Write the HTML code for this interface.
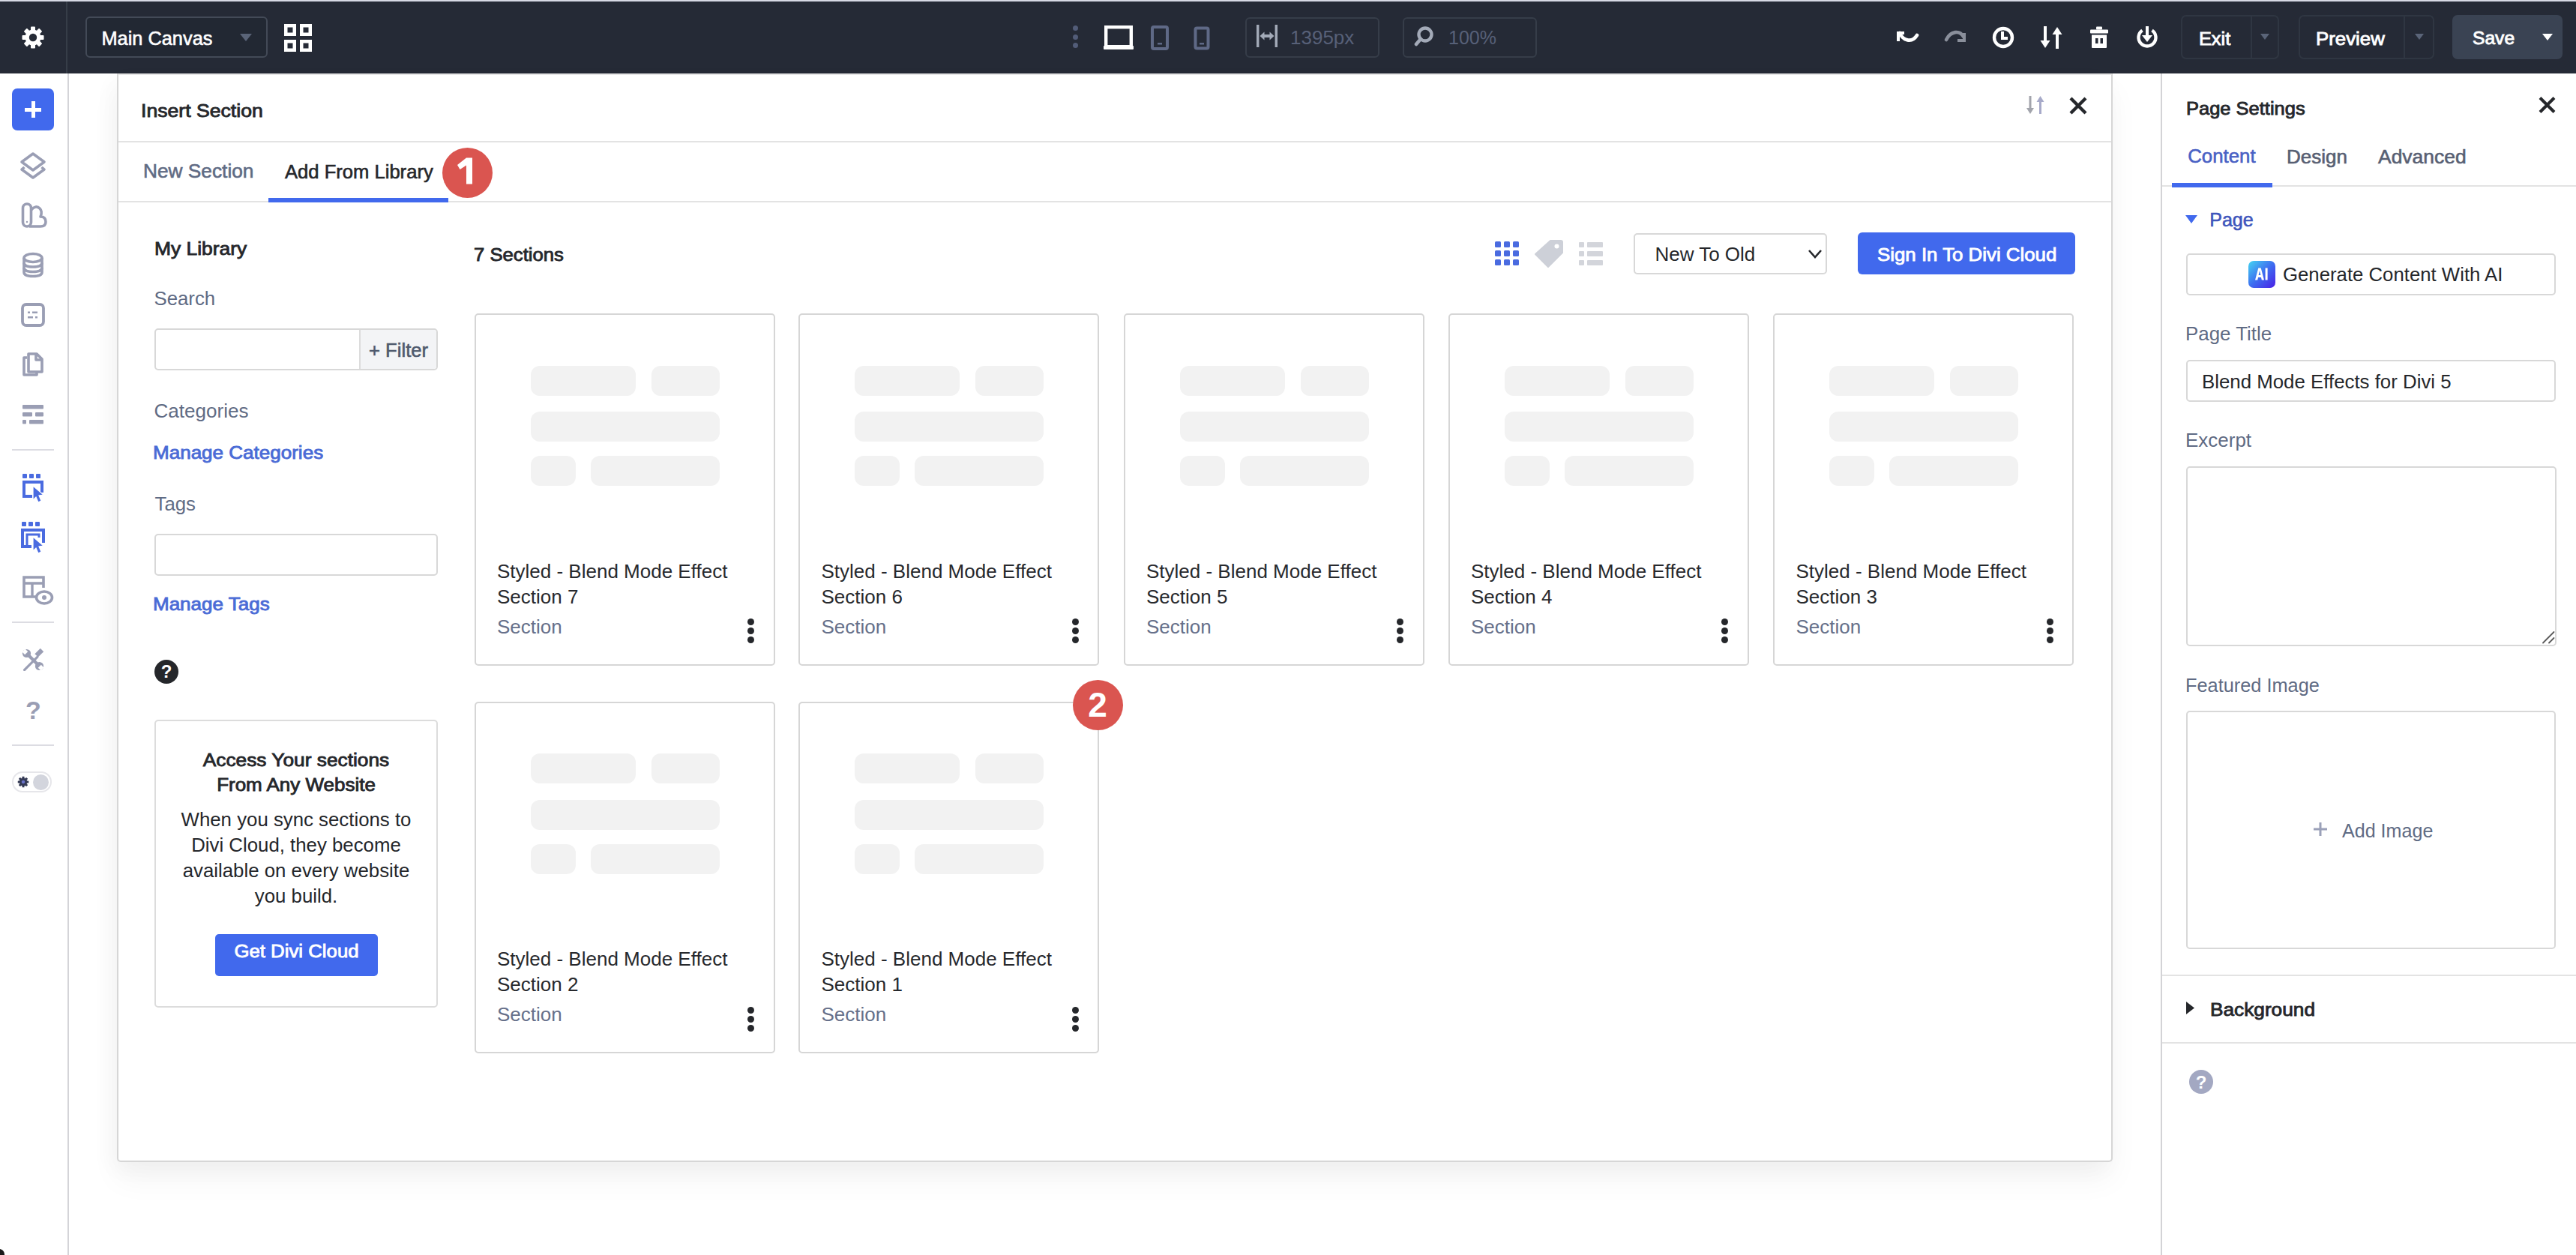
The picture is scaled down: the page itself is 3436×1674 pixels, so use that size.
<!DOCTYPE html>
<html><head><meta charset="utf-8">
<style>
*{box-sizing:border-box}
html,body{margin:0;padding:0}
body{width:3436px;height:1674px;position:relative;overflow:hidden;background:#fff;font-family:"Liberation Sans",sans-serif;color:#25272b}
.a{position:absolute}
.t{position:absolute;white-space:nowrap;line-height:1}
.m{-webkit-text-stroke:0.6px}
.m2{-webkit-text-stroke:0.85px}
#topstrip{left:0;top:0;width:3436px;height:2px;background:#d6d9e4}
#bar{left:0;top:2px;width:3436px;height:96px;background:#252a36}
#sidebar-sep{left:90px;top:98px;width:2px;height:1576px;background:#d4d4d8}
#modal{left:156px;top:98px;width:2662px;height:1452px;border:2px solid #d6d6d6;border-top-color:#e6e6e6;border-radius:0 0 5px 5px;background:#fff;box-shadow:0 24px 40px rgba(0,0,0,0.045), -6px 10px 30px rgba(0,0,0,0.03)}
#panel{left:2882px;top:98px;width:554px;height:1576px;background:#fff;border-left:2px solid #d3d3d6}
.hline{position:absolute;height:2px;background:#e3e3e3}
.card{position:absolute;width:401px;height:469.5px;border:2px solid #d6d6d6;border-radius:5px;background:#fff}
.sk{position:absolute;background:#f2f2f2;border-radius:12px;height:40px}
.ctitle{position:absolute;left:28.5px;white-space:nowrap;font-size:26px;line-height:34px;color:#27292d}
.csub{position:absolute;left:28.5px;font-size:26px;line-height:1;color:#66708a}
.dots{position:absolute;right:25.5px;width:9px}
.dots i{display:block;width:9px;height:9px;border-radius:50%;background:#25272b;margin-bottom:3px}
.input{position:absolute;border:2px solid #d8d8d8;border-radius:5px;background:#fff}
.slate{color:#5f6b84}
.blue{color:#4a6bd6}
.badge{position:absolute;width:67px;height:67px;border-radius:50%;background:#da5550;color:#fff;font-weight:bold;font-size:46px;text-align:center;line-height:67px}
</style></head>
<body>
<div id="topstrip" class="a"></div>
<div id="bar" class="a"></div>

<!-- TOP BAR -->
<div class="a" style="left:88px;top:2px;width:2px;height:96px;background:#363d48"></div>
<svg class="a" style="left:28px;top:34px" width="32" height="32" viewBox="0 0 32 32">
 <g fill="#fff" transform="translate(16,16)">
  <circle r="10.5"/>
  <g id="tooth"><rect x="-3" y="-14.5" width="6" height="6" rx="1"/></g>
  <use href="#tooth" transform="rotate(45)"/><use href="#tooth" transform="rotate(90)"/><use href="#tooth" transform="rotate(135)"/>
  <use href="#tooth" transform="rotate(180)"/><use href="#tooth" transform="rotate(225)"/><use href="#tooth" transform="rotate(270)"/><use href="#tooth" transform="rotate(315)"/>
  <circle r="5.2" fill="#252a36"/>
 </g>
</svg>
<div class="a" style="left:114px;top:22px;width:243px;height:55px;border:2px solid #434a57;border-radius:6px;background:#222833"></div>
<div class="t m" style="left:135.5px;top:38.9px;font-size:25.35px;color:#fff">Main Canvas</div>
<svg class="a" style="left:319px;top:44px" width="18" height="12" viewBox="0 0 18 12"><path d="M1 1 L17 1 L9 11 Z" fill="#5a6478"/></svg>
<svg class="a" style="left:379px;top:32px" width="37" height="37" viewBox="0 0 37 37" fill="none" stroke="#fff" stroke-width="4.5">
 <rect x="2.25" y="2.25" width="11.5" height="11.5"/><rect x="23.25" y="2.25" width="11.5" height="11.5"/>
 <rect x="2.25" y="23.25" width="11.5" height="11.5"/><rect x="23.25" y="23.25" width="11.5" height="11.5"/>
</svg>
<!-- dots -->
<div class="a" style="left:1431px;top:34px;width:7px;height:7px;border-radius:50%;background:#525c78"></div>
<div class="a" style="left:1431px;top:45.5px;width:7px;height:7px;border-radius:50%;background:#525c78"></div>
<div class="a" style="left:1431px;top:57px;width:7px;height:7px;border-radius:50%;background:#525c78"></div>
<!-- laptop -->
<svg class="a" style="left:1470px;top:32px" width="44" height="36" viewBox="0 0 44 36">
 <rect x="5.2" y="4.2" width="33.6" height="26" fill="none" stroke="#fff" stroke-width="4.4"/>
 <rect x="2" y="29" width="40" height="5" rx="1" fill="#fff"/>
</svg>
<!-- tablet -->
<svg class="a" style="left:1533px;top:32px" width="28" height="36" viewBox="0 0 28 36">
 <rect x="4" y="4" width="20" height="29" rx="2" fill="none" stroke="#5f6986" stroke-width="4"/>
 <rect x="11" y="25" width="6" height="2.5" fill="#5f6986"/>
</svg>
<!-- phone -->
<svg class="a" style="left:1591px;top:34px" width="24" height="34" viewBox="0 0 24 34">
 <rect x="3.5" y="3.5" width="17" height="27" rx="2" fill="none" stroke="#5f6986" stroke-width="4"/>
 <rect x="9" y="23" width="6" height="2.5" fill="#5f6986"/>
</svg>
<div class="a" style="left:1661px;top:23px;width:179px;height:54px;border:2px solid #363d49;border-radius:6px"></div>
<svg class="a" style="left:1674px;top:32px" width="32" height="32" viewBox="0 0 32 32">
 <rect x="2" y="1" width="3.4" height="30" fill="#a3aab8"/><rect x="26.6" y="1" width="3.4" height="30" fill="#a3aab8"/>
 <path d="M6.5 16 L12.5 10.5 L12.5 14 L19.5 14 L19.5 10.5 L25.5 16 L19.5 21.5 L19.5 18 L12.5 18 L12.5 21.5 Z" fill="#a3aab8"/>
</svg>
<div class="t" style="left:1721.0px;top:36.9px;font-size:26.01px;color:#576078">1395px</div>
<div class="a" style="left:1871px;top:23px;width:179px;height:54px;border:2px solid #363d49;border-radius:6px"></div>
<svg class="a" style="left:1886px;top:33px" width="28" height="30" viewBox="0 0 28 30">
 <circle cx="15" cy="13" r="8.5" fill="none" stroke="#a3aab8" stroke-width="4.4"/>
 <path d="M9 19 L3 26" stroke="#a3aab8" stroke-width="4.6" stroke-linecap="round"/>
</svg>
<div class="t" style="left:1932.0px;top:38.0px;font-size:25.00px;color:#576078">100%</div>
<!-- right icons -->
<svg class="a" style="left:2526px;top:38px" width="36" height="22" viewBox="0 0 36 22">
 <path d="M8 6 C 12 16, 24 20, 31 9" fill="none" stroke="#fff" stroke-width="4.6" stroke-linecap="round"/>
 <path d="M4 4 L14 4 L14 8 L8 8 L8 17 L4 17 Z" fill="#fff"/>
</svg>
<svg class="a" style="left:2592px;top:36px" width="34" height="24" viewBox="0 0 34 24">
 <path d="M4 17 C 10 5, 22 4, 27 13" fill="none" stroke="#8a8f9b" stroke-width="4.6" stroke-linecap="round"/>
 <path d="M30 8 L30 20 L19 20 L19 16 L26 16 L26 8 Z" fill="#8a8f9b"/>
</svg>
<svg class="a" style="left:2655px;top:34px" width="34" height="32" viewBox="0 0 34 32">
 <circle cx="17" cy="16" r="12" fill="none" stroke="#fff" stroke-width="4.4"/>
 <path d="M16 8 L16 17 L23 17" fill="none" stroke="#fff" stroke-width="4"/>
</svg>
<svg class="a" style="left:2719px;top:34px" width="34" height="32" viewBox="0 0 34 32">
 <rect x="7" y="1" width="4" height="22" fill="#fff"/><path d="M2.5 20 L15.5 20 L9 30 Z" fill="#fff"/>
 <rect x="23" y="9" width="4" height="22" fill="#fff"/><path d="M18.5 12 L31.5 12 L25 2 Z" fill="#fff"/>
</svg>
<svg class="a" style="left:2786px;top:34px" width="28" height="32" viewBox="0 0 28 32">
 <rect x="10" y="1.5" width="8" height="4" rx="1" fill="#fff"/>
 <rect x="2" y="5.5" width="24" height="5" rx="1" fill="#fff"/>
 <path d="M4 12.5 L24 12.5 L24 29 Q24 30 23 30 L5 30 Q4 30 4 29 Z" fill="#fff"/>
 <rect x="9" y="17" width="3.5" height="7" fill="#252a36"/><rect x="15.5" y="17" width="3.5" height="7" fill="#252a36"/>
</svg>
<svg class="a" style="left:2848px;top:34px" width="32" height="32" viewBox="0 0 32 32">
 <path d="M9.5 6.5 A 11.5 11.5 0 1 0 22.5 6.5" fill="none" stroke="#fff" stroke-width="4.4"/>
 <rect x="14" y="1" width="4" height="15" fill="#fff"/><path d="M9 13 L23 13 L16 22 Z" fill="#fff"/>
</svg>
<div class="a" style="left:2909px;top:20px;width:131px;height:59px;border:2px solid #2f3642;border-radius:7px"></div>
<div class="a" style="left:3002px;top:20px;width:2px;height:59px;background:#2f3642"></div>
<div class="t m2" style="left:2933.0px;top:39.9px;font-size:24.20px;font-weight:normal;color:#fff;transform-origin:0 0;transform:scaleX(1.0459);">Exit</div>
<svg class="a" style="left:3014px;top:44px" width="14" height="10" viewBox="0 0 14 10"><path d="M1 1 L13 1 L7 9 Z" fill="#5a6478"/></svg>
<div class="a" style="left:3066px;top:20px;width:181px;height:59px;border:2px solid #2f3642;border-radius:7px"></div>
<div class="a" style="left:3206px;top:20px;width:2px;height:59px;background:#2f3642"></div>
<div class="t m2" style="left:3089.0px;top:39.9px;font-size:24.20px;font-weight:normal;color:#fff;transform-origin:0 0;transform:scaleX(1.0669);">Preview</div>
<svg class="a" style="left:3220px;top:44px" width="14" height="10" viewBox="0 0 14 10"><path d="M1 1 L13 1 L7 9 Z" fill="#5a6478"/></svg>
<div class="a" style="left:3271px;top:20px;width:147px;height:59px;border-radius:7px;background:#3a4353"></div>
<div class="t m2" style="left:3297.6px;top:39.1px;font-size:24.20px;font-weight:normal;color:#fff;transform-origin:0 0;transform:scaleX(1.0174);">Save</div>
<svg class="a" style="left:3390px;top:44px" width="16" height="11" viewBox="0 0 16 11"><path d="M1 1 L15 1 L8 10 Z" fill="#fff"/></svg>
<div id="sidebar-sep" class="a"></div>

<!-- SIDEBAR -->
<div class="a" style="left:16px;top:118px;width:56px;height:56px;border-radius:7px;background:#4169ed"></div>
<div class="a" style="left:33px;top:143.5px;width:22px;height:5px;background:#fff"></div>
<div class="a" style="left:41.5px;top:135px;width:5px;height:22px;background:#fff"></div>
<svg class="a" style="left:26px;top:202px" width="36" height="38" viewBox="0 0 36 38" fill="none" stroke="#9a9eb4" stroke-width="3.6" stroke-linejoin="round">
 <path d="M18 3 L33 14 L18 25 L3 14 Z"/>
 <path d="M6.5 21 L3 24 L18 35 L33 24 L29.5 21"/>
</svg>
<svg class="a" style="left:27px;top:269px" width="38" height="36" viewBox="0 0 38 36" fill="none" stroke="#9a9eb4" stroke-width="3.6" stroke-linejoin="round">
 <rect x="3.5" y="3" width="11" height="30" rx="5.5"/>
 <path d="M14.5 11 Q 21 4 26 9 Q 30 13 27 20 Q 34 20 34 27 Q 34 33 27 33 L 12 33"/>
 <circle cx="9" cy="27" r="1.2" fill="#9a9eb4" stroke="none"/>
</svg>
<svg class="a" style="left:28px;top:336px" width="32" height="35" viewBox="0 0 32 35" fill="none" stroke="#9a9eb4" stroke-width="3.6">
 <ellipse cx="16" cy="8" rx="12" ry="5.5"/>
 <path d="M4 8 L4 27 Q4 32.5 16 32.5 Q28 32.5 28 27 L28 8"/>
 <path d="M4 14.5 Q4 20 16 20 Q28 20 28 14.5"/><path d="M4 21 Q4 26.5 16 26.5 Q28 26.5 28 21"/>
</svg>
<svg class="a" style="left:26px;top:402px" width="36" height="36" viewBox="0 0 36 36">
 <rect x="4" y="4" width="28" height="28" rx="5" fill="none" stroke="#9a9eb4" stroke-width="3.8"/>
 <rect x="11" y="13.5" width="3" height="2.5" fill="#9a9eb4"/><rect x="17" y="13.5" width="7" height="2.5" fill="#9a9eb4"/>
 <rect x="11" y="20" width="7" height="2.5" fill="#9a9eb4"/><rect x="21" y="20" width="3" height="2.5" fill="#9a9eb4"/>
</svg>
<svg class="a" style="left:28px;top:468px" width="32" height="36" viewBox="0 0 32 36" fill="none" stroke="#9a9eb4" stroke-width="3.6" stroke-linejoin="round">
 <path d="M8 9 L4 9 L4 32 L21 32 L21 28"/>
 <path d="M10 4 L21 4 L28 11 L28 28 L10 28 Z"/>
 <path d="M20 4 L20 12 L28 12"/>
</svg>
<svg class="a" style="left:29px;top:538px" width="30" height="30" viewBox="0 0 30 30" fill="#9a9eb4">
 <rect x="1" y="2" width="28" height="5.5" rx="1"/>
 <rect x="1" y="12" width="13" height="5.5" rx="1"/><rect x="18" y="12" width="11" height="5.5" rx="1"/>
 <rect x="1" y="22" width="5" height="5.5" rx="1"/><rect x="10" y="22" width="19" height="5.5" rx="1"/>
</svg>
<div class="a" style="left:16px;top:599px;width:56px;height:2px;background:#dcdce2"></div>
<svg class="a" style="left:28px;top:630px" width="34" height="44" viewBox="0 0 34 44">
 <rect x="2" y="2" width="6" height="6" rx="1" fill="#4a6be0"/><rect x="11" y="2" width="6" height="6" rx="1" fill="#4a6be0"/><rect x="20" y="2" width="6" height="6" rx="1" fill="#4a6be0"/>
 <path d="M15 32 L4 32 L4 13 L28 13 L28 27" fill="none" stroke="#4a6be0" stroke-width="4"/>
 <path d="M16 18 L30 30 L24 31 L27 38 L23 40 L20 33 L16 37 Z" fill="#4a6be0" stroke="#fff" stroke-width="1.2"/>
</svg>
<svg class="a" style="left:26px;top:694px" width="38" height="46" viewBox="0 0 38 46">
 <rect x="3" y="2" width="6" height="6" rx="1" fill="#4a6be0"/><rect x="12" y="2" width="6" height="6" rx="1" fill="#4a6be0"/><rect x="21" y="2" width="6" height="6" rx="1" fill="#4a6be0"/>
 <path d="M16 35 L4 35 L4 13 L32 13 L32 30" fill="none" stroke="#4a6be0" stroke-width="4"/>
 <path d="M16 35 L10 35 L10 19 L26 19 L26 23" fill="none" stroke="#4a6be0" stroke-width="3"/>
 <path d="M18 22 L32 34 L26 35 L29 42 L25 44 L22 37 L18 41 Z" fill="#4a6be0" stroke="#fff" stroke-width="1.2"/>
</svg>
<svg class="a" style="left:28px;top:766px" width="44" height="42" viewBox="0 0 44 42">
 <path d="M20 30 L4 30 L4 4 L30 4 L30 18" fill="none" stroke="#9a9eb4" stroke-width="3.6"/>
 <path d="M4 12 L30 12 M15 12 L15 30" fill="none" stroke="#9a9eb4" stroke-width="3.4"/>
 <ellipse cx="31" cy="31" rx="10.5" ry="8" fill="#fff" stroke="#9a9eb4" stroke-width="3.6"/>
 <circle cx="31" cy="31" r="3" fill="#9a9eb4"/>
</svg>
<div class="a" style="left:16px;top:829px;width:56px;height:2px;background:#dcdce2"></div>
<svg class="a" style="left:29px;top:865px" width="30" height="30" viewBox="0 0 30 30">
 <g fill="#9a9eb4" stroke="none">
  <path d="M6.5 9.5 L21 24 L24 21 L9.5 6.5 Z"/>
  <circle cx="6.5" cy="6.5" r="5.6"/><circle cx="23.5" cy="23.5" r="5.6"/>
  <path d="M20.8 11.4 L3.6 28.6" stroke="#9a9eb4" stroke-width="3.2" stroke-linecap="round"/>
  <path d="M29.2 4.2 L24.8 -0.2 L17.4 7.2 L21.8 11.6 Z"/>
 </g>
 <g fill="#fff">
  <path d="M0.5 4.5 L4.5 0.5 L8.2 4.2 L4.2 8.2 Z"/>
  <path d="M29.5 25.5 L25.5 29.5 L21.8 25.8 L25.8 21.8 Z"/>
 </g>
</svg>
<div class="t" style="left:34px;top:929.5px;font-size:34px;font-weight:bold;color:#9a9eb4">?</div>
<div class="a" style="left:16px;top:993px;width:56px;height:2px;background:#dcdce2"></div>
<div class="a" style="left:16px;top:1029px;width:53px;height:28px;border-radius:14px;border:2px solid #e6e6ea;background:#fff"></div>
<svg class="a" style="left:23px;top:1035px" width="16" height="16" viewBox="0 0 32 32">
 <g fill="#343a55" transform="translate(16,16)">
  <circle r="10.5"/>
  <rect x="-3" y="-14.5" width="6" height="6" rx="1"/><rect x="-3" y="-14.5" width="6" height="6" rx="1" transform="rotate(45)"/><rect x="-3" y="-14.5" width="6" height="6" rx="1" transform="rotate(90)"/><rect x="-3" y="-14.5" width="6" height="6" rx="1" transform="rotate(135)"/>
  <rect x="-3" y="-14.5" width="6" height="6" rx="1" transform="rotate(180)"/><rect x="-3" y="-14.5" width="6" height="6" rx="1" transform="rotate(225)"/><rect x="-3" y="-14.5" width="6" height="6" rx="1" transform="rotate(270)"/><rect x="-3" y="-14.5" width="6" height="6" rx="1" transform="rotate(315)"/>
  <circle r="4.5" fill="#6a72c8"/>
 </g>
</svg>
<div class="a" style="left:44px;top:1033px;width:21px;height:21px;border-radius:50%;background:#d3d5dd"></div>
<div id="modal" class="a"></div>

<!-- MODAL CONTENT -->
<div class="t m2" style="left:188.4px;top:135.5px;font-size:24.20px;font-weight:normal;color:#25272b;transform-origin:0 0;transform:scaleX(1.1004);">Insert Section</div>
<svg class="a" style="left:2702px;top:126px" width="28" height="28" viewBox="0 0 28 28">
 <rect x="4.5" y="2" width="3" height="19" fill="#a2a4ac"/><path d="M1 18 L11 18 L6 26 Z" fill="#a2a4ac"/>
 <rect x="18" y="7" width="3" height="19" fill="#a7aac9"/><path d="M14.5 10 L24.5 10 L19.5 2 Z" fill="#a7aac9"/>
</svg>
<svg class="a" style="left:2759px;top:128px" width="26" height="26" viewBox="0 0 26 26"><path d="M3 3 L23 23 M23 3 L3 23" stroke="#25272b" stroke-width="4.4"/></svg>
<div class="hline" style="left:158px;top:188px;width:2658px"></div>
<div class="t m" style="left:191.0px;top:215.2px;font-size:26.28px;font-weight:normal;color:#5f6b84;">New Section</div>
<div class="t m" style="left:380.0px;top:217.3px;font-size:25.60px;font-weight:normal;color:#25272b;">Add From Library</div>
<div class="a" style="left:358px;top:264px;width:240px;height:6px;background:#4169ed"></div>
<div class="hline" style="left:158px;top:268px;width:2658px"></div>
<div class="a" style="left:358px;top:264px;width:240px;height:6px;background:#4169ed"></div>
<div class="badge" style="left:589.5px;top:196.5px"></div><svg class="a" style="left:600px;top:200px" width="46" height="60" viewBox="0 0 46 60"><path d="M22 10.5 L30 10.5 L30 45.5 L22 45.5 L22 20.5 L13.5 26 L10 20 Z" fill="#fff"/></svg>
<div class="t m2" style="left:206.0px;top:320.1px;font-size:24.20px;font-weight:normal;color:#25272b;transform-origin:0 0;transform:scaleX(1.0914);">My Library</div>
<div class="t" style="left:205.5px;top:386.4px;font-size:25.78px;font-weight:normal;color:#5f6b84;">Search</div>
<div class="input" style="left:206px;top:438px;width:378px;height:56px"></div>
<div class="a" style="left:479px;top:440px;width:103px;height:52px;background:#f3f4f6;border-left:2px solid #dcdcdc;border-radius:0 4px 4px 0"></div>
<div class="t m" style="left:492.0px;top:455.4px;font-size:25.66px;font-weight:normal;color:#4f5a6e;">+ Filter</div>
<div class="t" style="left:205.5px;top:534.8px;font-size:26.07px;font-weight:normal;color:#5f6b84;">Categories</div>
<div class="t m2" style="left:204.2px;top:591.9px;font-size:24.20px;font-weight:normal;color:#4a6bd6;transform-origin:0 0;transform:scaleX(1.0760);">Manage Categories</div>
<div class="t" style="left:206.5px;top:659.9px;font-size:25.80px;font-weight:normal;color:#5f6b84;">Tags</div>
<div class="input" style="left:206px;top:712px;width:378px;height:56px"></div>
<div class="t m2" style="left:204.2px;top:793.8px;font-size:24.20px;font-weight:normal;color:#4a6bd6;transform-origin:0 0;transform:scaleX(1.0749);">Manage Tags</div>
<div class="a" style="left:206px;top:880px;width:32px;height:32px;border-radius:50%;background:#25272b;color:#fff;font-weight:bold;font-size:24px;text-align:center;line-height:32px">?</div>
<div class="a" style="left:206px;top:960px;width:378px;height:384px;border:2px solid #dcdcdc;border-radius:5px"></div>
<div class="t m2" style="left:206px;width:378px;text-align:center;top:1001.5px;font-size:24.2px;font-weight:normal;color:#25272b;transform-origin:50% 0;transform:scaleX(1.087)">Access Your sections</div>
<div class="t m2" style="left:206px;width:378px;text-align:center;top:1035px;font-size:24.2px;font-weight:normal;color:#25272b;transform-origin:50% 0;transform:scaleX(1.074)">From Any Website</div>
<div class="t" style="left:206px;width:378px;text-align:center;top:1081.2px;font-size:25.8px;font-weight:normal;color:#25272b">When you sync sections to</div>
<div class="t" style="left:206px;width:378px;text-align:center;top:1115.2px;font-size:25.8px;font-weight:normal;color:#25272b">Divi Cloud, they become</div>
<div class="t" style="left:206px;width:378px;text-align:center;top:1149.1px;font-size:25.8px;font-weight:normal;color:#25272b">available on every website</div>
<div class="t" style="left:206px;width:378px;text-align:center;top:1183.0px;font-size:25.8px;font-weight:normal;color:#25272b">you build.</div>
<div class="a" style="left:287px;top:1246px;width:217px;height:56px;border-radius:5px;background:#4169ed"></div>
<div class="t m2" style="left:287px;width:217px;text-align:center;top:1256.5px;font-size:24.2px;font-weight:normal;color:#fff;transform-origin:50% 0;transform:scaleX(1.066)">Get Divi Cloud</div>
<div class="t m2" style="left:632.0px;top:328.4px;font-size:24.20px;font-weight:normal;color:#25272b;transform-origin:0 0;transform:scaleX(1.0618);">7 Sections</div>
<svg class="a" style="left:1993px;top:321px" width="34" height="34" viewBox="0 0 34 34" fill="#4a6be0"><rect x="1" y="1" width="8" height="8" rx="1.5"/><rect x="13" y="1" width="8" height="8" rx="1.5"/><rect x="25" y="1" width="8" height="8" rx="1.5"/><rect x="1" y="13" width="8" height="8" rx="1.5"/><rect x="13" y="13" width="8" height="8" rx="1.5"/><rect x="25" y="13" width="8" height="8" rx="1.5"/><rect x="1" y="25" width="8" height="8" rx="1.5"/><rect x="13" y="25" width="8" height="8" rx="1.5"/><rect x="25" y="25" width="8" height="8" rx="1.5"/></svg>
<svg class="a" style="left:2046px;top:318px" width="40" height="40" viewBox="0 0 40 40">
 <path d="M22 3 L36 3 Q38 3 38 5 L38 19 L19 38 L2 21 Z" fill="#cdd0d8" stroke="#cdd0d8" stroke-width="2" stroke-linejoin="round"/>
 <circle cx="30.5" cy="10.5" r="3" fill="#fff"/>
</svg>
<svg class="a" style="left:2105px;top:321px" width="34" height="34" viewBox="0 0 34 34" fill="#d3d5db">
 <rect x="1" y="2" width="7" height="7" rx="1"/><rect x="12" y="2" width="21" height="7" rx="1"/>
 <rect x="1" y="14" width="7" height="7" rx="1"/><rect x="12" y="14" width="21" height="7" rx="1"/>
 <rect x="1" y="26" width="7" height="7" rx="1"/><rect x="12" y="26" width="21" height="7" rx="1"/>
</svg>
<div class="input" style="left:2179px;top:311px;width:258px;height:55px"></div>
<div class="t" style="left:2207.4px;top:325.5px;font-size:26.00px;font-weight:normal;color:#25272b;">New To Old</div>
<svg class="a" style="left:2411px;top:332px" width="20" height="14" viewBox="0 0 20 14"><path d="M2 2 L10 11 L18 2" fill="none" stroke="#25272b" stroke-width="2.6"/></svg>
<div class="a" style="left:2478px;top:310px;width:290px;height:56px;border-radius:6px;background:#4169ed"></div>
<div class="t m2" style="left:2503.5px;top:327.6px;font-size:24.20px;font-weight:normal;color:#fff;transform-origin:0 0;transform:scaleX(1.0682);">Sign In To Divi Cloud</div>
<div class="card" style="left:632.5px;top:418px"><div class="sk" style="left:73px;top:67.5px;width:140px"></div><div class="sk" style="left:234px;top:67.5px;width:91px"></div><div class="sk" style="left:73px;top:129px;width:252px"></div><div class="sk" style="left:73px;top:188px;width:60px"></div><div class="sk" style="left:153px;top:188px;width:172px"></div><div class="ctitle" style="top:324.5px">Styled - Blend Mode Effect<br>Section 7</div><div class="csub" style="top:402.5px">Section</div><div class="dots" style="top:405px"><i></i><i></i><i></i></div></div>
<div class="card" style="left:1065px;top:418px"><div class="sk" style="left:73px;top:67.5px;width:140px"></div><div class="sk" style="left:234px;top:67.5px;width:91px"></div><div class="sk" style="left:73px;top:129px;width:252px"></div><div class="sk" style="left:73px;top:188px;width:60px"></div><div class="sk" style="left:153px;top:188px;width:172px"></div><div class="ctitle" style="top:324.5px">Styled - Blend Mode Effect<br>Section 6</div><div class="csub" style="top:402.5px">Section</div><div class="dots" style="top:405px"><i></i><i></i><i></i></div></div>
<div class="card" style="left:1498.5px;top:418px"><div class="sk" style="left:73px;top:67.5px;width:140px"></div><div class="sk" style="left:234px;top:67.5px;width:91px"></div><div class="sk" style="left:73px;top:129px;width:252px"></div><div class="sk" style="left:73px;top:188px;width:60px"></div><div class="sk" style="left:153px;top:188px;width:172px"></div><div class="ctitle" style="top:324.5px">Styled - Blend Mode Effect<br>Section 5</div><div class="csub" style="top:402.5px">Section</div><div class="dots" style="top:405px"><i></i><i></i><i></i></div></div>
<div class="card" style="left:1931.5px;top:418px"><div class="sk" style="left:73px;top:67.5px;width:140px"></div><div class="sk" style="left:234px;top:67.5px;width:91px"></div><div class="sk" style="left:73px;top:129px;width:252px"></div><div class="sk" style="left:73px;top:188px;width:60px"></div><div class="sk" style="left:153px;top:188px;width:172px"></div><div class="ctitle" style="top:324.5px">Styled - Blend Mode Effect<br>Section 4</div><div class="csub" style="top:402.5px">Section</div><div class="dots" style="top:405px"><i></i><i></i><i></i></div></div>
<div class="card" style="left:2365px;top:418px"><div class="sk" style="left:73px;top:67.5px;width:140px"></div><div class="sk" style="left:234px;top:67.5px;width:91px"></div><div class="sk" style="left:73px;top:129px;width:252px"></div><div class="sk" style="left:73px;top:188px;width:60px"></div><div class="sk" style="left:153px;top:188px;width:172px"></div><div class="ctitle" style="top:324.5px">Styled - Blend Mode Effect<br>Section 3</div><div class="csub" style="top:402.5px">Section</div><div class="dots" style="top:405px"><i></i><i></i><i></i></div></div>
<div class="card" style="left:632.5px;top:935.5px"><div class="sk" style="left:73px;top:67.5px;width:140px"></div><div class="sk" style="left:234px;top:67.5px;width:91px"></div><div class="sk" style="left:73px;top:129px;width:252px"></div><div class="sk" style="left:73px;top:188px;width:60px"></div><div class="sk" style="left:153px;top:188px;width:172px"></div><div class="ctitle" style="top:324.5px">Styled - Blend Mode Effect<br>Section 2</div><div class="csub" style="top:402.5px">Section</div><div class="dots" style="top:405px"><i></i><i></i><i></i></div></div>
<div class="card" style="left:1065px;top:935.5px"><div class="sk" style="left:73px;top:67.5px;width:140px"></div><div class="sk" style="left:234px;top:67.5px;width:91px"></div><div class="sk" style="left:73px;top:129px;width:252px"></div><div class="sk" style="left:73px;top:188px;width:60px"></div><div class="sk" style="left:153px;top:188px;width:172px"></div><div class="ctitle" style="top:324.5px">Styled - Blend Mode Effect<br>Section 1</div><div class="csub" style="top:402.5px">Section</div><div class="dots" style="top:405px"><i></i><i></i><i></i></div></div>
<div class="badge" style="left:1430.5px;top:907px">2</div>
<div id="panel" class="a"></div>

<!-- PANEL CONTENT -->
<div class="t m2" style="left:2916.0px;top:132.9px;font-size:24.20px;font-weight:normal;color:#25272b;transform-origin:0 0;transform:scaleX(1.0532);">Page Settings</div>
<svg class="a" style="left:3385px;top:128px" width="25" height="24" viewBox="0 0 25 24"><path d="M3 2.5 L22 21.5 M22 2.5 L3 21.5" stroke="#25272b" stroke-width="4"/></svg>
<div class="t m" style="left:2918.2px;top:195.7px;font-size:25.82px;font-weight:normal;color:#4961c4;">Content</div>
<div class="t m" style="left:3050.0px;top:196.2px;font-size:26.03px;font-weight:normal;color:#585f73;">Design</div>
<div class="t m" style="left:3172.0px;top:195.5px;font-size:26.46px;font-weight:normal;color:#585f73;">Advanced</div>
<div class="hline" style="left:2884px;top:247px;width:552px"></div>
<div class="a" style="left:2897px;top:244px;width:134px;height:6px;background:#4169ed"></div>
<svg class="a" style="left:2914px;top:286px" width="18" height="14" viewBox="0 0 18 14"><path d="M1 1 L17 1 L9 12 Z" fill="#4169ed"/></svg>
<div class="t m" style="left:2947.2px;top:281.2px;font-size:25.09px;font-weight:normal;color:#3f56bc;">Page</div>
<div class="input" style="left:2916px;top:338px;width:493px;height:56px"></div>
<svg class="a" style="left:2999px;top:348px" width="36" height="36" viewBox="0 0 36 36">
 <defs><linearGradient id="aig" x1="0" y1="0" x2="1" y2="1"><stop offset="0" stop-color="#45d6f2"/><stop offset="0.5" stop-color="#3d6ef0"/><stop offset="1" stop-color="#4a1fe6"/></linearGradient></defs>
 <rect x="0" y="0" width="36" height="36" rx="7" fill="url(#aig)"/>
 <path d="M9 25.5 L13.3 9.5 L16.7 9.5 L21 25.5 L17.8 25.5 L17 22 L13 22 L12.2 25.5 Z M13.6 19 L16.4 19 L15 13 Z" fill="#fff"/>
 <rect x="22.6" y="9.5" width="3" height="16" fill="#fff"/>
</svg>
<div class="t" style="left:3045.0px;top:354.4px;font-size:25.76px;font-weight:normal;color:#25272b;">Generate Content With AI</div>
<div class="t" style="left:2915.0px;top:433.2px;font-size:25.88px;font-weight:normal;color:#5f6b84;">Page Title</div>
<div class="input" style="left:2916px;top:480px;width:493px;height:56px"></div>
<div class="t" style="left:2937.0px;top:497.3px;font-size:25.83px;font-weight:normal;color:#25272b;">Blend Mode Effects for Divi 5</div>
<div class="t" style="left:2915.0px;top:573.8px;font-size:25.99px;font-weight:normal;color:#5f6b84;">Excerpt</div>
<div class="input" style="left:2916px;top:622px;width:493.5px;height:240px"></div>
<svg class="a" style="left:3390px;top:841px" width="18" height="18" viewBox="0 0 18 18"><path d="M2 16.5 L16.5 2 M10 16.5 L16.5 10" stroke="#5a5a5a" stroke-width="1.8" stroke-linecap="round"/></svg>
<div class="t" style="left:2915.0px;top:901.8px;font-size:25.33px;font-weight:normal;color:#5f6b84;">Featured Image</div>
<div class="input" style="left:2916px;top:948px;width:493px;height:318px"></div>
<svg class="a" style="left:3085px;top:1096px" width="20" height="20" viewBox="0 0 20 20"><path d="M10 1 L10 19 M1 10 L19 10" stroke="#9aa0b8" stroke-width="3"/></svg>
<div class="t" style="left:3124.0px;top:1095.8px;font-size:25.10px;font-weight:normal;color:#5f6b84;">Add Image</div>
<div class="hline" style="left:2884px;top:1300px;width:552px"></div>
<svg class="a" style="left:2914px;top:1335px" width="14" height="19" viewBox="0 0 14 19"><path d="M2 1 L13 9.5 L2 18 Z" fill="#25272b"/></svg>
<div class="t m2" style="left:2947.5px;top:1335.1px;font-size:24.20px;font-weight:normal;color:#25272b;transform-origin:0 0;transform:scaleX(1.0843);">Background</div>
<div class="hline" style="left:2884px;top:1390px;width:552px"></div>
<div class="a" style="left:2920px;top:1427px;width:32px;height:32px;border-radius:50%;background:#a3a8c2;color:#fff;font-weight:bold;font-size:24px;text-align:center;line-height:33px">?</div>
<div class="a" style="left:-8px;top:1666px;width:14px;height:14px;border-radius:50%;background:#1a1a1a"></div>
<script>(function(){var w=window.innerWidth;if(w&&Math.abs(w-3436)>2){document.body.style.zoom=(w/3436);}})();</script>
</body></html>
